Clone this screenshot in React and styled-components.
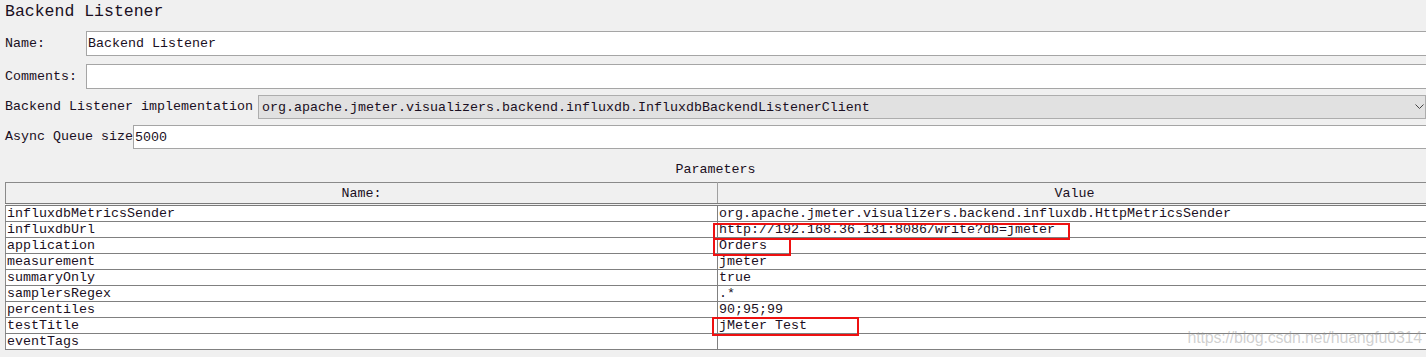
import React from 'react';
import styled, { createGlobalStyle } from 'styled-components';

const GlobalStyle = createGlobalStyle`
  html, body {
    margin: 0;
    padding: 0;
    background: #f0f0f0;
    overflow: hidden;
  }
  body {
    font-family: "Liberation Mono", "DejaVu Sans Mono", monospace;
    font-size: 13.33px;
    color: #1a0f22;
  }
`;

const Page = styled.div`
  position: relative;
  width: 1432px;
  height: 357px;
  display: flex;
  flex-direction: column;
`;

const Title = styled.h1`
  margin: 0;
  padding: 2px 0 0 5px;
  height: 31px;
  box-sizing: border-box;
  font-family: "Liberation Mono", monospace;
  font-weight: normal;
  font-size: 16.5px;
  line-height: 20px;
`;

const FieldRow = styled.div`
  display: flex;
  align-items: center;
  padding-left: 5px;
  margin-top: ${(p) => p.$top || 0}px;
`;

const Label = styled.label`
  flex: 0 0 ${(p) => p.$width}px;
  white-space: pre;
  line-height: 16px;
`;

const TextField = styled.div`
  flex: 1;
  height: ${(p) => p.$height || 25}px;
  box-sizing: border-box;
  background: #fff;
  border: 1px solid #a5a5a5;
  padding: 0 1px;
  display: flex;
  align-items: center;
  white-space: pre;
`;

const Combo = styled.div`
  flex: 1;
  height: 24px;
  box-sizing: border-box;
  background: #e1e1e1;
  border: 1px solid #adadad;
  display: flex;
  align-items: center;
  justify-content: space-between;
  padding: 0 0 0 3px;
  margin-right: 6px;
`;

const Chevron = styled.svg`
  width: 9px;
  height: 6px;
  margin-right: 1px;
`;

const Caption = styled.div`
  margin-top: 10px;
  height: 23px;
  text-align: center;
  line-height: 22px;
  padding-left: 5px;
  width: 1426px;
  box-sizing: border-box;
`;

const Table = styled.table`
  margin-left: 5px;
  width: 1427px;
  border-collapse: collapse;
  table-layout: fixed;
  background: #fff;
  border-left: 1px solid #8a8a8a;
`;

const HeadCell = styled.th`
  height: 22px;
  padding: 0;
  font-weight: normal;
  text-align: center;
  background: #f0f0f0;
  border-top: 1px solid #8a8a8a;
  border-bottom: 3px double #7a7a7a;
  border-right: 1px solid #a0a0a0;
  box-sizing: border-box;
`;

const Cell = styled.td`
  position: relative;
  height: 16px;
  padding: 0 0 0 1px;
  line-height: 15px;
  border-bottom: 1px solid #808080;
  border-right: 1px solid #808080;
  box-sizing: border-box;
  white-space: pre;
  overflow: visible;
`;

const Mark = styled.span`
  position: absolute;
  left: ${(p) => p.$left}px;
  top: ${(p) => p.$top}px;
  width: ${(p) => p.$width}px;
  height: ${(p) => p.$height}px;
  border: 2px solid #ee1111;
  box-sizing: border-box;
  pointer-events: none;
`;

const Watermark = styled.div`
  position: absolute;
  right: 10px;
  top: 329px;
  font-family: "Liberation Sans", Arial, sans-serif;
  font-size: 16px;
  color: rgba(150, 150, 150, 0.45);
  letter-spacing: -0.2px;
`;

const params = [
  ['influxdbMetricsSender', 'org.apache.jmeter.visualizers.backend.influxdb.HttpMetricsSender'],
  ['influxdbUrl', 'http://192.168.36.131:8086/write?db=jmeter', { left: -5, top: 1, width: 357, height: 17 }],
  ['application', 'Orders', { left: -5, top: 0, width: 78, height: 18 }],
  ['measurement', 'jmeter'],
  ['summaryOnly', 'true'],
  ['samplersRegex', '.*'],
  ['percentiles', '90;95;99'],
  ['testTitle', 'jMeter Test', { left: -6, top: -1, width: 147, height: 19 }],
  ['eventTags', ''],
];

export default function App() {
  return (
    <Page>
      <GlobalStyle />
      <Title>Backend Listener</Title>
      <FieldRow>
        <Label $width={81}>Name:</Label>
        <TextField>Backend Listener</TextField>
      </FieldRow>
      <FieldRow $top={8}>
        <Label $width={81}>Comments:</Label>
        <TextField />
      </FieldRow>
      <FieldRow $top={6}>
        <Label $width={253}>Backend Listener implementation</Label>
        <Combo>
          org.apache.jmeter.visualizers.backend.influxdb.InfluxdbBackendListenerClient
          <Chevron viewBox="0 0 9 6">
            <path d="M0.5 0.5 L4.5 4.5 L8.5 0.5" fill="none" stroke="#444" strokeWidth="1" />
          </Chevron>
        </Combo>
      </FieldRow>
      <FieldRow $top={6}>
        <Label $width={128}>Async Queue size</Label>
        <TextField $height={24}>5000</TextField>
      </FieldRow>
      <Caption>Parameters</Caption>
      <Table>
        <colgroup>
          <col style={{ width: 712 }} />
          <col />
        </colgroup>
        <thead>
          <tr>
            <HeadCell>Name:</HeadCell>
            <HeadCell>Value</HeadCell>
          </tr>
        </thead>
        <tbody>
          {params.map(([name, value, mark]) => (
            <tr key={name}>
              <Cell>{name}</Cell>
              <Cell>
                {value}
                {mark && <Mark $left={mark.left} $top={mark.top} $width={mark.width} $height={mark.height} />}
              </Cell>
            </tr>
          ))}
        </tbody>
      </Table>
      <Watermark>https://blog.csdn.net/huangfu0314</Watermark>
    </Page>
  );
}
